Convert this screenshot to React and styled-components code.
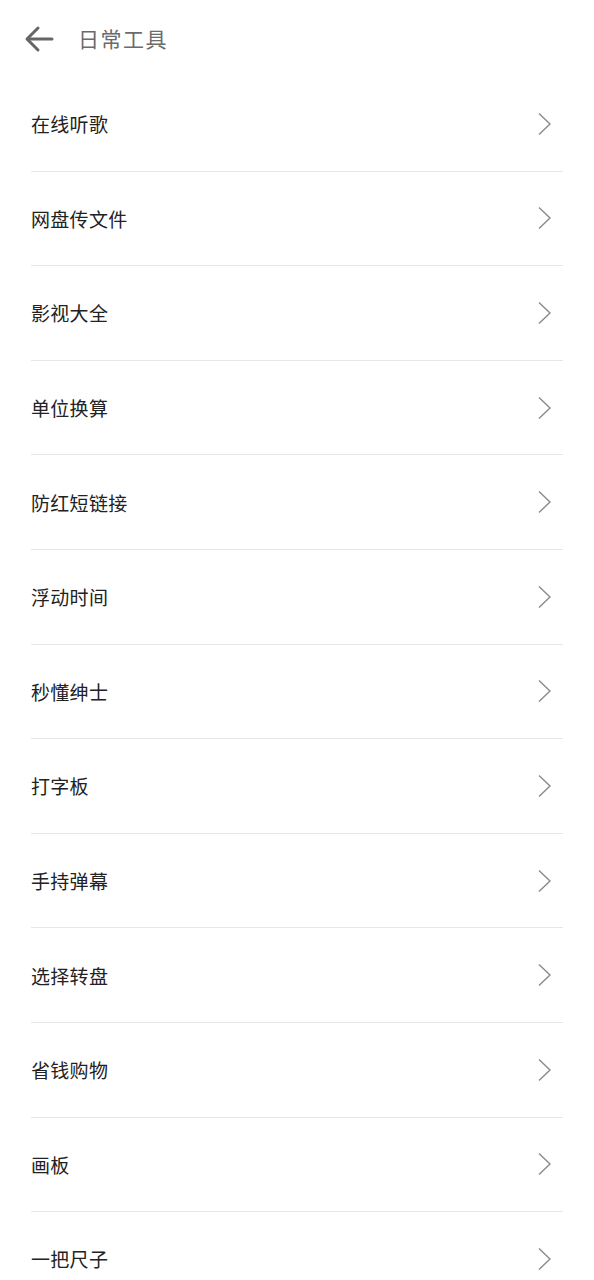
import React from 'react';
import styled, { createGlobalStyle } from 'styled-components';

const GlobalStyle = createGlobalStyle`
  html, body {
    margin: 0;
    padding: 0;
    background: #ffffff;
    font-family: "Noto Sans CJK SC", "Noto Sans", sans-serif;
  }
`;

const Page = styled.div`
  width: 594px;
  min-height: 1280px;
  background: #ffffff;
  overflow: hidden;
`;

const Header = styled.header`
  display: flex;
  align-items: center;
  height: 77px;
  padding-left: 23px;
  box-sizing: border-box;
`;

const BackButton = styled.button`
  display: flex;
  align-items: center;
  justify-content: center;
  width: 32px;
  height: 32px;
  padding: 0;
  margin: 0 23px 0 0;
  border: none;
  background: transparent;
  cursor: pointer;
`;

const Title = styled.h1`
  margin: 0;
  font-size: 21px;
  font-weight: 400;
  color: #6b6b6b;
  letter-spacing: 1.5px;
  line-height: 1;
`;

const List = styled.ul`
  list-style: none;
  margin: 0 31px;
  padding: 0;
`;

const Row = styled.li`
  display: flex;
  align-items: center;
  justify-content: space-between;
  height: 94.6px;
  box-sizing: border-box;
  border-bottom: 1px solid #e6e6e6;
  padding-right: 11px;
  cursor: pointer;
`;

const Label = styled.span`
  font-size: 19px;
  color: #222222;
  letter-spacing: 0.3px;
`;

const Chevron = () => (
  <svg width="15" height="24" viewBox="0 0 15 24" fill="none">
    <path d="M2 1.5 L13 12 L2 22.5" stroke="#8a8a8a" strokeWidth="1.4" strokeLinejoin="miter" />
  </svg>
);

const BackArrow = () => (
  <svg width="30" height="28" viewBox="0 0 30 28" fill="none">
    <path d="M28 14 H4" stroke="#666666" strokeWidth="3" strokeLinecap="round" />
    <path d="M14 3 L3 14 L14 25" stroke="#666666" strokeWidth="3" strokeLinecap="round" strokeLinejoin="round" />
  </svg>
);

const tools = [
  '在线听歌',
  '网盘传文件',
  '影视大全',
  '单位换算',
  '防红短链接',
  '浮动时间',
  '秒懂绅士',
  '打字板',
  '手持弹幕',
  '选择转盘',
  '省钱购物',
  '画板',
  '一把尺子',
];

const App = () => (
  <Page>
    <GlobalStyle />
    <Header>
      <BackButton aria-label="返回">
        <BackArrow />
      </BackButton>
      <Title>日常工具</Title>
    </Header>
    <List>
      {tools.map((name) => (
        <Row key={name}>
          <Label>{name}</Label>
          <Chevron />
        </Row>
      ))}
    </List>
  </Page>
);

export default App;
